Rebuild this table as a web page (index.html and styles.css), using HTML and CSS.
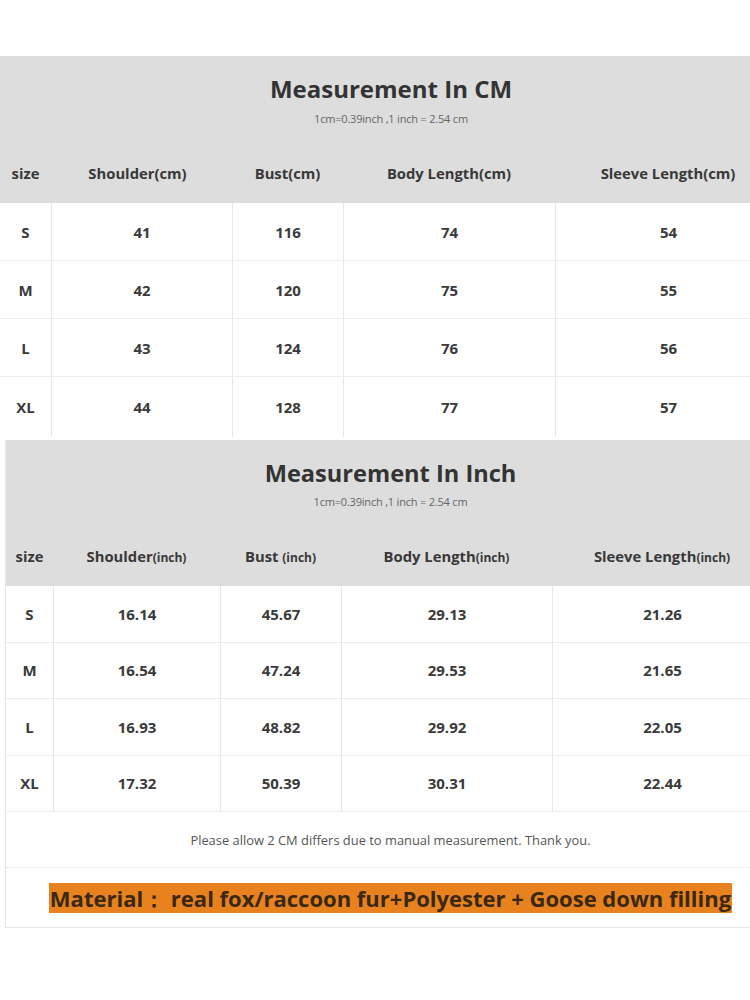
FILE: index.html
```html
<!DOCTYPE html>
<html>
<head>
<meta charset="utf-8">
<link rel="stylesheet" href="styles.css">
</head>
<body>
<div class="page">
  <section class="chart chart-cm">
    <div class="head">
      <h1 class="title">Measurement In CM</h1>
      <p class="sub">1cm=0.39inch ,1 inch = 2.54 cm</p>
      <div class="row labels">
        <div class="cell c-size"><span>size</span></div>
        <div class="cell"><span>Shoulder(cm)</span></div>
        <div class="cell"><span>Bust(cm)</span></div>
        <div class="cell"><span>Body Length(cm)</span></div>
        <div class="cell c-last"><span>Sleeve Length(cm)</span></div>
      </div>
    </div>
    <div class="row data"><div class="cell c-size">S</div><div class="cell">41</div><div class="cell">116</div><div class="cell">74</div><div class="cell c-last">54</div></div>
    <div class="row data"><div class="cell c-size">M</div><div class="cell">42</div><div class="cell">120</div><div class="cell">75</div><div class="cell c-last">55</div></div>
    <div class="row data"><div class="cell c-size">L</div><div class="cell">43</div><div class="cell">124</div><div class="cell">76</div><div class="cell c-last">56</div></div>
    <div class="row data last-row"><div class="cell c-size">XL</div><div class="cell">44</div><div class="cell">128</div><div class="cell">77</div><div class="cell c-last">57</div></div>
  </section>

  <section class="chart chart-inch">
    <div class="head">
      <h1 class="title">Measurement In Inch</h1>
      <p class="sub">1cm=0.39inch ,1 inch = 2.54 cm</p>
      <div class="row labels">
        <div class="cell c-size"><span>size</span></div>
        <div class="cell"><span>Shoulder<small>(inch)</small></span></div>
        <div class="cell"><span>Bust <small>(inch)</small></span></div>
        <div class="cell"><span>Body Length<small>(inch)</small></span></div>
        <div class="cell c-last"><span>Sleeve Length<small>(inch)</small></span></div>
      </div>
    </div>
    <div class="row data"><div class="cell c-size">S</div><div class="cell">16.14</div><div class="cell">45.67</div><div class="cell">29.13</div><div class="cell c-last">21.26</div></div>
    <div class="row data"><div class="cell c-size">M</div><div class="cell">16.54</div><div class="cell">47.24</div><div class="cell">29.53</div><div class="cell c-last">21.65</div></div>
    <div class="row data"><div class="cell c-size">L</div><div class="cell">16.93</div><div class="cell">48.82</div><div class="cell">29.92</div><div class="cell c-last">22.05</div></div>
    <div class="row data"><div class="cell c-size">XL</div><div class="cell">17.32</div><div class="cell">50.39</div><div class="cell">30.31</div><div class="cell c-last">22.44</div></div>
    <div class="note">Please allow 2 CM differs due to manual measurement. Thank you.</div>
    <div class="material"><span class="material-text">Material：&nbsp;real fox/raccoon fur+Polyester + Goose down filling</span></div>
  </section>
</div>
</body>
</html>
```

FILE: styles.css
```css
html, body {
  margin: 0;
  padding: 0;
  background: #ffffff;
}

.page {
  width: 750px;
  padding-top: 56px;
  font-family: "Open Sans", "Liberation Sans", sans-serif;
  color: #353535;
}

.chart {
  display: flex;
  flex-direction: column;
}

.chart-inch {
  margin-top: 3px;
  margin-left: 5px;
  border-left: 1px solid #e6e6e6;
  border-bottom: 1px solid #e6e6e6;
}

.head {
  background: #dddddd;
  display: flex;
  flex-direction: column;
  align-items: center;
}

.title {
  margin: 19px 0 0 0;
  font-size: 24px;
  line-height: 28px;
  font-weight: 700;
  color: #333333;
  padding-left: 32px;
}

.chart-inch .title {
  padding-left: 25px;
  font-size: 23.6px;
}

.sub {
  margin: 10px 0 0 0;
  font-size: 11px;
  line-height: 12px;
  color: #666666;
  padding-left: 32px;
  letter-spacing: -0.2px;
}

.chart-inch .sub {
  margin-top: 9px;
  padding-left: 25px;
}

.row {
  display: grid;
  width: 100%;
}

.chart-cm .row {
  grid-template-columns: 51px 181px 111px 212px 1fr;
}

.chart-inch .row {
  grid-template-columns: 47px 167px 121px 211px 1fr;
}

.labels {
  margin-top: 18px;
  height: 60px;
  font-size: 14.8px;
  font-weight: 700;
  color: #383838;
}

.labels small {
  font-size: 12px;
  font-weight: 700;
}

.cell {
  display: flex;
  align-items: center;
  justify-content: center;
  white-space: nowrap;
}

.chart-cm .labels .cell:nth-child(2) {
  padding-right: 8px;
}

.chart-cm .c-last {
  padding-left: 31px;
}

.chart-inch .c-last {
  padding-left: 22px;
}

.data {
  height: 57px;
  border-bottom: 1px solid #ececec;
  font-size: 15px;
  font-weight: 700;
  color: #3a3a3a;
}

.chart-cm .data.last-row {
  border-bottom: none;
  height: 60px;
}

.chart-inch .data {
  height: 55.5px;
}

.data .cell + .cell {
  border-left: 1px solid #e6e6e6;
}

.note {
  height: 55px;
  display: flex;
  align-items: center;
  justify-content: center;
  padding-left: 25px;
  font-size: 12.9px;
  color: #555555;
  border-bottom: 1px dotted #e4e4e4;
}

.material {
  height: 59px;
  display: flex;
  align-items: center;
  justify-content: center;
  padding-left: 25px;
}

.material-text {
  background: #e8821f;
  color: #3a2812;
  font-size: 22px;
  font-weight: 700;
  line-height: 30px;
  padding: 0 1px;
  white-space: nowrap;
}
```
